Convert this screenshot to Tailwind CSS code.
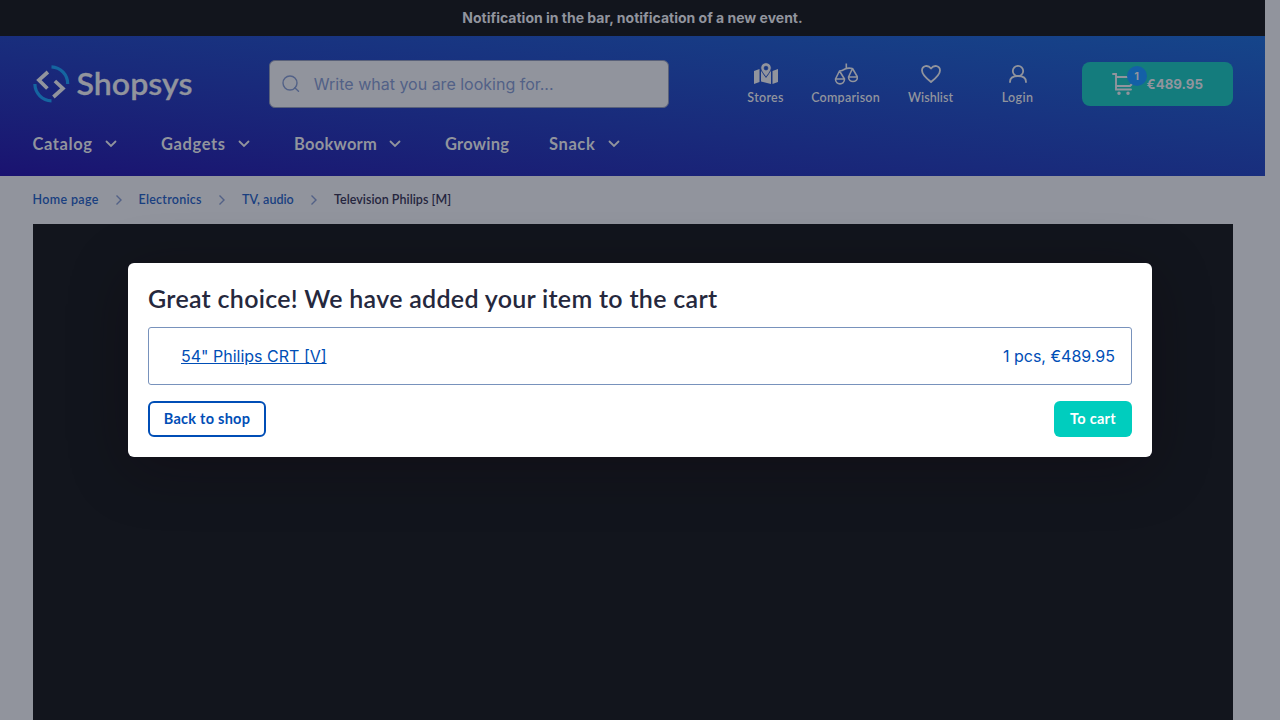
<!DOCTYPE html>
<html lang="en">
<head>
<meta charset="utf-8">
<title>Shopsys</title>
<script src="https://cdn.jsdelivr.net/npm/@tailwindcss/browser@4"></script>
</head>
<body class="h-screen overflow-hidden bg-[#91949d] font-['Inter',sans-serif]">
<div class="w-[1265px]">
  <div class="flex h-9 items-center justify-center bg-[#12151d] text-sm font-bold text-[#91949d]"><span>Notification in the bar, notification of a new event.</span></div>
  <header class="h-[140px] bg-linear-to-tr from-[#1a1270] to-[#15458a] px-[32.5px] pt-6 text-[#91949d]">
    <div class="flex h-12 items-center">
      <div class="flex w-[236.5px] items-center">
        <svg class="h-[52px] w-[164px]" viewBox="0 0 164 52" fill="none">
          <path d="M18.500 8.800A17 17 0 0 1 34.700 26M18.500 42.800A17 17 0 0 1 1.900 26" stroke="#1565a0" stroke-width="3.200"/>
          <path d="M14.900 14L5.900 22L14.400 30.500M21.900 23L29.900 30.500L20.400 39" stroke="#91949d" stroke-width="3.700"/>
          <text x="43.500" y="37" textLength="116" lengthAdjust="spacingAndGlyphs" font-family="Lato" font-size="31" font-weight="600" fill="#91949d" stroke="#91949d" stroke-width=".3">Shopsys</text>
        </svg>
      </div>
      <div class="flex h-12 w-[400px] items-center rounded-md border border-[#59617a] bg-[#91949d] pl-3 text-[#526187]">
        <svg class="h-[18px] w-[18px]" viewBox="0 0 18 18" fill="none" stroke="currentColor" stroke-width="1.400"><circle cx="8" cy="8" r="7"/><path d="M12.800 12.800l3.700 3.400" stroke-linecap="round"/></svg>
        <span class="ml-3.5 text-base">Write what you are looking for...</span>
      </div>
      <nav class="ml-[61px] flex pt-1 text-[12.5px] font-semibold font-['Lato',sans-serif]">
        <div class="flex w-[72px] flex-col items-center">
          <svg class="h-6 w-6" viewBox="0 0 24 24" fill="currentColor"><path d="M0 9l5.500-2v13L0 22zM18.500 9l5.500-2v13l-5.500 2zM7 8.500l5 7.500 5-7.500V22L7 19.500z"/><path fill-rule="evenodd" d="M12 .7a5.200 5.200 0 0 1 5.200 5.200C17.200 9 12 15 12 15S6.800 9 6.800 5.900A5.200 5.200 0 0 1 12 .7zm0 3.500a1.900 1.900 0 1 0 0 3.800 1.900 1.900 0 0 0 0-3.800z" stroke="#17337f" stroke-width=".7"/></svg>
          <span class="leading-6 tracking-[.3px]">Stores</span>
        </div>
        <div class="flex w-[88px] flex-col items-center">
          <svg class="h-6 w-6" viewBox="0 0 24 24" fill="none" stroke="currentColor" stroke-width="1.600" stroke-linejoin="round"><path d="M12.300 1.500v5M5.500 9Q8 9 11 7Q14 5.500 18.500 6.500M5.500 9L1.500 17h9zM18.500 6.500L14.500 15h9zM1.500 17c0 6.500 9 6.500 9 0M14.500 15c0 6 9 6 9 0"/></svg>
          <span class="leading-6 tracking-[.25px]">Comparison</span>
        </div>
        <div class="flex w-[82px] flex-col items-center">
          <svg class="h-6 w-6" viewBox="0 0 24 24" fill="none" stroke="currentColor" stroke-width="1.800" stroke-linejoin="round"><path d="M12 20C9 17.500 3 13 3 8.500C3 3.500 9 2.500 12 6.500C15 2.500 21 3.500 21 8.500C21 13 15 17.500 12 20z"/></svg>
          <span class="leading-6 tracking-[.05px]">Wishlist</span>
        </div>
        <div class="ml-[5px] flex w-[82px] flex-col items-center">
          <svg class="h-6 w-6" viewBox="0 0 24 24" fill="none" stroke="currentColor" stroke-width="1.800" stroke-linecap="round"><circle cx="12" cy="9" r="5.200"/><path d="M4 20c0-4 3.500-6 8-6s8 2 8 6"/></svg>
          <span class="leading-6 tracking-[.4px]">Login</span>
        </div>
      </nav>
      <div class="relative ml-[23px] flex h-11 w-[151px] items-center rounded-lg bg-[#147c7d] pl-[30px]">
        <svg class="h-6 w-6" viewBox="0 0 24 24" fill="none" stroke="currentColor" stroke-width="1.900" stroke-linecap="round"><path d="M1 2h3v15.500h15M4 5h16M4 14h14l2-2"/><circle cx="7" cy="21.300" r=".8" fill="currentColor"/><circle cx="16" cy="21.300" r=".8" fill="currentColor"/></svg>
        <span class="absolute left-[45px] top-1 flex h-5 w-5 items-center justify-center rounded-full bg-[#1460a7] text-[11px] font-bold">1</span>
        <span class="ml-[11px] pt-px text-[13.3px] font-bold">€489.95</span>
      </div>
    </div>
    <nav class="mt-6 flex h-6 items-center text-[16.5px] font-bold font-['Lato',sans-serif]">
      <a class="flex w-[128.500px] items-center"><span class="w-[72px] tracking-[.6px]">Catalog</span><svg class="h-3 w-3" viewBox="0 0 12 12" fill="none" stroke="currentColor" stroke-width="1.800" stroke-linecap="round"><path d="M1.500 3.500l4.500 4.500 4.500-4.500"/></svg></a>
      <a class="flex w-[133px] items-center"><span class="w-[77px] tracking-[.6px]">Gadgets</span><svg class="h-3 w-3" viewBox="0 0 12 12" fill="none" stroke="currentColor" stroke-width="1.800" stroke-linecap="round"><path d="M1.500 3.500l4.500 4.500 4.500-4.500"/></svg></a>
      <a class="flex w-[151px] items-center"><span class="w-[95px] tracking-[.25px]">Bookworm</span><svg class="h-3 w-3" viewBox="0 0 12 12" fill="none" stroke="currentColor" stroke-width="1.800" stroke-linecap="round"><path d="M1.500 3.500l4.500 4.500 4.500-4.500"/></svg></a>
      <a class="flex w-[104px] items-center tracking-[.25px]">Growing</a>
      <a class="flex items-center"><span class="w-[59px] tracking-[.6px]">Snack</span><svg class="h-3 w-3" viewBox="0 0 12 12" fill="none" stroke="currentColor" stroke-width="1.800" stroke-linecap="round"><path d="M1.500 3.500l4.500 4.500 4.500-4.500"/></svg></a>
    </nav>
  </header>
  <main class="px-[32.5px]">
    <div class="flex h-12 items-center text-[12.5px] font-semibold text-[#193f80] font-['Lato',sans-serif]">
      <span class="w-[80px] tracking-[.35px]">Home page</span><svg class="mr-[14px] h-3 w-3" viewBox="0 0 12 12" fill="none" stroke="#526187" stroke-width="1.400"><path d="M3.500 1.500L8 6l-4.500 4.500"/></svg>
      <span class="w-[77px] tracking-[.25px]">Electronics</span><svg class="mr-[14px] h-3 w-3" viewBox="0 0 12 12" fill="none" stroke="#526187" stroke-width="1.400"><path d="M3.500 1.500L8 6l-4.500 4.500"/></svg>
      <span class="ml-[.5px] w-[66px]">TV, audio</span><svg class="mr-[14px] h-3 w-3" viewBox="0 0 12 12" fill="none" stroke="#526187" stroke-width="1.400"><path d="M3.500 1.500L8 6l-4.500 4.500"/></svg>
      <span class="tracking-[.03px] text-[#25253d]">Television Philips [M]</span>
    </div>
    <div class="h-[496px] bg-[#12151d]"></div>
  </main>
</div>
<section class="absolute left-32 top-[263px] flex h-[194px] w-[1024px] flex-col rounded-md bg-white p-5 shadow-[0_12px_60px_rgba(15,0,10,.3)]">
  <h1 class="h-11 whitespace-nowrap text-[25px] leading-[30px] font-semibold tracking-[.29px] text-[#25283d] font-['Lato',sans-serif]">Great choice! We have added your item to the cart</h1>
  <div class="flex h-[58px] items-center justify-between rounded-[3px] border border-[#7892bc] pl-8 pr-4 text-base text-[#004eb6]"><a class="underline">54" Philips CRT [V]</a><span>1 pcs, €489.95</span></div>
  <div class="mt-4 flex justify-between text-[14.5px] font-bold font-['Lato',sans-serif]">
    <button class="h-9 w-[118px] rounded-md border-2 border-[#004eb6] tracking-[.25px] text-[#004eb6]">Back to shop</button>
    <button class="h-9 w-[78px] rounded-md bg-[#00cdbe] tracking-[.3px] text-white">To cart</button>
  </div>
</section>
</body>
</html>
